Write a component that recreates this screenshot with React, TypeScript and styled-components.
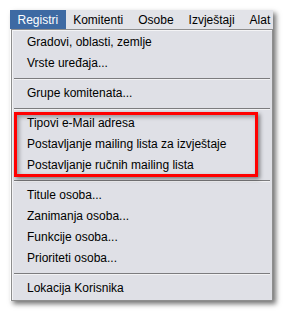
import React from 'react';
import styled, { createGlobalStyle } from 'styled-components';

const GlobalStyle = createGlobalStyle`
  html, body {
    margin: 0;
    padding: 0;
    background: #ffffff;
  }
  body {
    font-family: "Liberation Sans", Arial, sans-serif;
    font-size: 12px;
    color: #000;
  }
`;

const Page = styled.div`
  position: relative;
  width: 285px;
  height: 313px;
  padding: 10px 0 0 10px;
  box-sizing: border-box;
`;

const Frame = styled.div`
  width: 263px;
  display: flex;
  flex-direction: column;
  box-shadow: 3px 3px 5px rgba(0, 0, 0, 0.55);
`;

const MenuBar = styled.div`
  display: flex;
  height: 19px;
  background: #e2e3e8;
  overflow: hidden;
`;

const MenuTitle = styled.div<{ active?: boolean }>`
  display: flex;
  align-items: center;
  padding: 0 7.5px;
  white-space: nowrap;
  background: ${({ active }) => (active ? '#3e6aa3' : 'transparent')};
  color: ${({ active }) => (active ? '#ffffff' : '#000000')};
`;

const Dropdown = styled.div`
  display: flex;
  flex-direction: column;
  margin-left: 1px;
  padding: 2px 0 1px;
  background: #dfe0e6;
  border: 1px solid #8e8e8e;
  box-shadow: inset 1px 1px 0 #f4f4f6;
`;

const Item = styled.div`
  height: 21px;
  line-height: 21px;
  padding-left: 15px;
  white-space: nowrap;
`;

const Separator = styled.div`
  height: 9px;
  display: flex;
  align-items: center;
  padding: 0 2px;

  &::before {
    content: '';
    flex: 1;
    height: 1px;
    background: #7c7c7e;
    box-shadow: 0 1px 0 #f2f2f4;
  }
`;

// red annotation frame drawn over the menu
const Highlight = styled.div`
  position: absolute;
  left: 14px;
  top: 112px;
  width: 244px;
  height: 65px;
  box-sizing: border-box;
  border: 3px solid #ff0000;
  box-shadow: 2px 2px 4px rgba(0, 0, 0, 0.45),
    inset 2px 2px 4px rgba(0, 0, 0, 0.35);
`;

const menus = ['Registri', 'Komitenti', 'Osobe', 'Izvještaji', 'Alat'];

type Entry = string | null;

const entries: Entry[] = [
  'Gradovi, oblasti, zemlje',
  'Vrste uređaja...',
  null,
  'Grupe komitenata...',
  null,
  'Tipovi e-Mail adresa',
  'Postavljanje mailing lista za izvještaje',
  'Postavljanje ručnih mailing lista',
  null,
  'Titule osoba...',
  'Zanimanja osoba...',
  'Funkcije osoba...',
  'Prioriteti osoba...',
  null,
  'Lokacija Korisnika',
];

export default function App() {
  return (
    <>
      <GlobalStyle />
      <Page>
        <Frame>
          <MenuBar>
            {menus.map((m, i) => (
              <MenuTitle key={m} active={i === 0}>
                {m}
              </MenuTitle>
            ))}
          </MenuBar>
          <Dropdown>
            {entries.map((e, i) =>
              e === null ? <Separator key={i} /> : <Item key={i}>{e}</Item>
            )}
          </Dropdown>
        </Frame>
        <Highlight />
      </Page>
    </>
  );
}
